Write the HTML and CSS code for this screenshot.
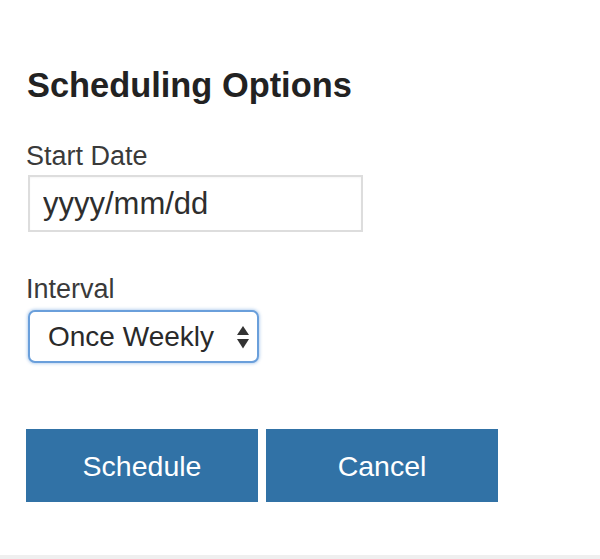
FILE: index.html
```html
<!DOCTYPE html>
<html lang="en">
<head>
<meta charset="utf-8">
<title>Scheduling Options</title>
<link rel="stylesheet" href="styles.css">
</head>
<body>
<main class="panel">
  <h1 class="title">Scheduling Options</h1>
  <label class="field-label" for="start">Start Date</label>
  <input class="text-input" id="start" type="text" value="yyyy/mm/dd">
  <label class="field-label field-label--interval">Interval</label>
  <div class="select">
    <span class="select-value">Once Weekly</span>
    <svg class="select-arrows" width="12" height="23" viewBox="0 0 12 23" aria-hidden="true">
      <polygon points="6,0 12,9 0,9" fill="#333"/>
      <polygon points="0,13 12,13 6,22.5" fill="#333"/>
    </svg>
  </div>
  <div class="actions">
    <button class="btn" type="button">Schedule</button>
    <button class="btn" type="button">Cancel</button>
  </div>
</main>
<div class="bottom-bar"></div>
</body>
</html>
```

FILE: styles.css
```css
html, body {
  margin: 0;
  padding: 0;
  background: #fff;
}

body {
  font-family: "Liberation Sans", Arial, sans-serif;
  color: #333;
  height: 559px;
  overflow: hidden;
}

.panel {
  display: flex;
  flex-direction: column;
  align-items: flex-start;
  padding: 65px 0 0 26px;
}

.title {
  margin: 0 0 0 1px;
  font-size: 34.4px;
  line-height: 40px;
  font-weight: bold;
  color: #222;
}

.field-label {
  display: block;
  margin: 35px 0 3px 0;
  font-size: 27px;
  line-height: 32px;
  color: #3a3a3a;
}

.field-label--interval {
  margin-top: 41px;
  margin-bottom: 5px;
}

.text-input {
  box-sizing: border-box;
  margin: 0 0 0 2px;
  width: 335px;
  height: 57px;
  padding: 0 13px;
  border: 2px solid #dddddd;
  border-radius: 0;
  box-shadow: inset 0 1px 2px rgba(0, 0, 0, 0.04);
  font-family: "Liberation Sans", Arial, sans-serif;
  font-size: 31px;
  line-height: 53px;
  color: #2e2e2e;
  outline: none;
  background: #fff;
}

.select {
  box-sizing: border-box;
  margin-left: 2px;
  width: 231px;
  height: 53px;
  padding: 0 8px 0 18px;
  border: 2px solid #6a9fdb;
  border-radius: 7px;
  box-shadow: 0 0 3px 1px rgba(106, 159, 219, 0.45);
  display: flex;
  align-items: center;
  justify-content: space-between;
  background: #fff;
}

.select-value {
  font-size: 28px;
  line-height: 49px;
  color: #2a2a2a;
}

.select-arrows {
  display: block;
  margin-top: 2px;
}

.actions {
  display: flex;
  gap: 8px;
  margin-top: 66px;
}

.btn {
  box-sizing: border-box;
  width: 232px;
  height: 73px;
  margin: 0;
  padding: 0;
  border: none;
  border-radius: 0;
  background: #3172a6;
  color: #fff;
  font-family: "Liberation Sans", Arial, sans-serif;
  font-size: 28.5px;
  line-height: 75px;
  text-align: center;
}

.bottom-bar {
  margin-top: 53px;
  height: 10px;
  background: #efefef;
}
```
